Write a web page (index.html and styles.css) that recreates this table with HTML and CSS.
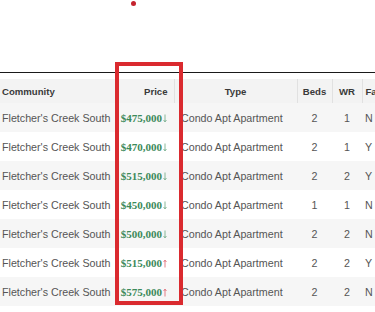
FILE: index.html
```html
<!DOCTYPE html>
<html>
<head>
<meta charset="utf-8">
<link rel="stylesheet" href="styles.css">
</head>
<body>
<div class="page">
  <div class="dot"></div>
  <div class="rule"></div>
  <table class="listings">
    <colgroup>
      <col class="w-comm"><col class="w-price"><col class="w-type"><col class="w-num"><col class="w-wr"><col class="w-fa">
    </colgroup>
    <thead>
      <tr>
        <th class="c-comm">Community</th>
        <th class="c-price">Price</th>
        <th class="c-type">Type</th>
        <th class="c-num">Beds</th>
        <th class="c-wr">WR</th>
        <th class="c-fa">Fa</th>
      </tr>
    </thead>
    <tbody>
      <tr>
        <td class="c-comm">Fletcher's Creek South</td>
        <td class="c-price"><span class="amt">$475,000</span><svg class="arr down" viewBox="0 0 4 9"><path d="M2 0.5V7.5M0.6 6L2 8L3.4 6"/></svg></td>
        <td class="c-type">Condo Apt Apartment</td>
        <td class="c-num">2</td>
        <td class="c-wr">1</td>
        <td class="c-fa">N</td>
      </tr>
      <tr>
        <td class="c-comm">Fletcher's Creek South</td>
        <td class="c-price"><span class="amt">$470,000</span><svg class="arr down" viewBox="0 0 4 9"><path d="M2 0.5V7.5M0.6 6L2 8L3.4 6"/></svg></td>
        <td class="c-type">Condo Apt Apartment</td>
        <td class="c-num">2</td>
        <td class="c-wr">1</td>
        <td class="c-fa">Y</td>
      </tr>
      <tr>
        <td class="c-comm">Fletcher's Creek South</td>
        <td class="c-price"><span class="amt">$515,000</span><svg class="arr down" viewBox="0 0 4 9"><path d="M2 0.5V7.5M0.6 6L2 8L3.4 6"/></svg></td>
        <td class="c-type">Condo Apt Apartment</td>
        <td class="c-num">2</td>
        <td class="c-wr">2</td>
        <td class="c-fa">Y</td>
      </tr>
      <tr>
        <td class="c-comm">Fletcher's Creek South</td>
        <td class="c-price"><span class="amt">$450,000</span><svg class="arr down" viewBox="0 0 4 9"><path d="M2 0.5V7.5M0.6 6L2 8L3.4 6"/></svg></td>
        <td class="c-type">Condo Apt Apartment</td>
        <td class="c-num">1</td>
        <td class="c-wr">1</td>
        <td class="c-fa">N</td>
      </tr>
      <tr>
        <td class="c-comm">Fletcher's Creek South</td>
        <td class="c-price"><span class="amt">$500,000</span><svg class="arr down" viewBox="0 0 4 9"><path d="M2 0.5V7.5M0.6 6L2 8L3.4 6"/></svg></td>
        <td class="c-type">Condo Apt Apartment</td>
        <td class="c-num">2</td>
        <td class="c-wr">2</td>
        <td class="c-fa">N</td>
      </tr>
      <tr>
        <td class="c-comm">Fletcher's Creek South</td>
        <td class="c-price"><span class="amt">$515,000</span><svg class="arr up" viewBox="0 0 4 9"><path d="M2 8.5V1.5M0.6 3L2 1L3.4 3"/></svg></td>
        <td class="c-type">Condo Apt Apartment</td>
        <td class="c-num">2</td>
        <td class="c-wr">2</td>
        <td class="c-fa">Y</td>
      </tr>
      <tr>
        <td class="c-comm">Fletcher's Creek South</td>
        <td class="c-price"><span class="amt">$575,000</span><svg class="arr up" viewBox="0 0 4 9"><path d="M2 8.5V1.5M0.6 3L2 1L3.4 3"/></svg></td>
        <td class="c-type">Condo Apt Apartment</td>
        <td class="c-num">2</td>
        <td class="c-wr">2</td>
        <td class="c-fa">N</td>
      </tr>
    </tbody>
  </table>
  <div class="highlight"></div>
</div>
</body>
</html>
```
FILE: styles.css
```css
html, body {
  margin: 0;
  padding: 0;
  background: #fff;
  overflow: hidden;
}
.page {
  position: relative;
  width: 375px;
  height: 312px;
  overflow: hidden;
  font-family: "Liberation Sans", Arial, sans-serif;
}
.dot {
  width: 5px;
  height: 5px;
  border-radius: 50%;
  background: #c4232e;
  margin: 1px 0 0 131px;
}
.rule {
  margin-top: 66px;
  height: 1px;
  background: #1a1a1a;
  width: 375px;
}
.listings {
  margin-top: 6px;
  border-collapse: collapse;
  table-layout: fixed;
  width: 420px;
}
.w-comm { width: 115px; }
.w-price { width: 59px; }
.w-type { width: 123px; }
.w-num { width: 35px; }
.w-wr { width: 30px; }
.w-fa { width: 58px; }
.listings th,
.listings td {
  box-sizing: border-box;
  padding: 0;
  white-space: nowrap;
  overflow: hidden;
}
.listings th {
  height: 24px;
  background: #f3f3f3;
  font-size: 9.6px;
  font-weight: bold;
  color: #3a3a3a;
  border-right: 1px solid #e1e1e1;
}
.listings td {
  height: 29px;
  font-size: 10.7px;
  color: #555;
}
.listings tbody tr:nth-child(odd) td {
  background: #f6f6f6;
}
.c-comm {
  text-align: left;
}
.listings .c-comm {
  padding-left: 2px;
}
.c-price {
  text-align: right;
}
.listings th.c-price {
  padding-right: 6px;
}
.listings td.c-price {
  padding-right: 7px;
}
.c-type {
  text-align: center;
}
.listings td.c-type {
  text-align: left;
  padding-left: 7px;
}
.c-num,
.c-wr {
  text-align: center;
}
.c-fa {
  text-align: left;
}
.listings .c-fa {
  padding-left: 3px;
}
.amt {
  font-family: "Liberation Serif", "Times New Roman", serif;
  font-weight: bold;
  font-size: 11px;
  color: #3c8a5a;
}
.arr {
  width: 4px;
  height: 9px;
  margin-left: 1px;
  vertical-align: -1px;
  fill: none;
  stroke-width: 0.9;
}
.arr.down {
  stroke: #7ab08f;
}
.arr.up {
  stroke: #e0707c;
}
.highlight {
  position: absolute;
  left: 115px;
  top: 62px;
  width: 60px;
  height: 235px;
  border: 4px solid #da2a2f;
}
```
